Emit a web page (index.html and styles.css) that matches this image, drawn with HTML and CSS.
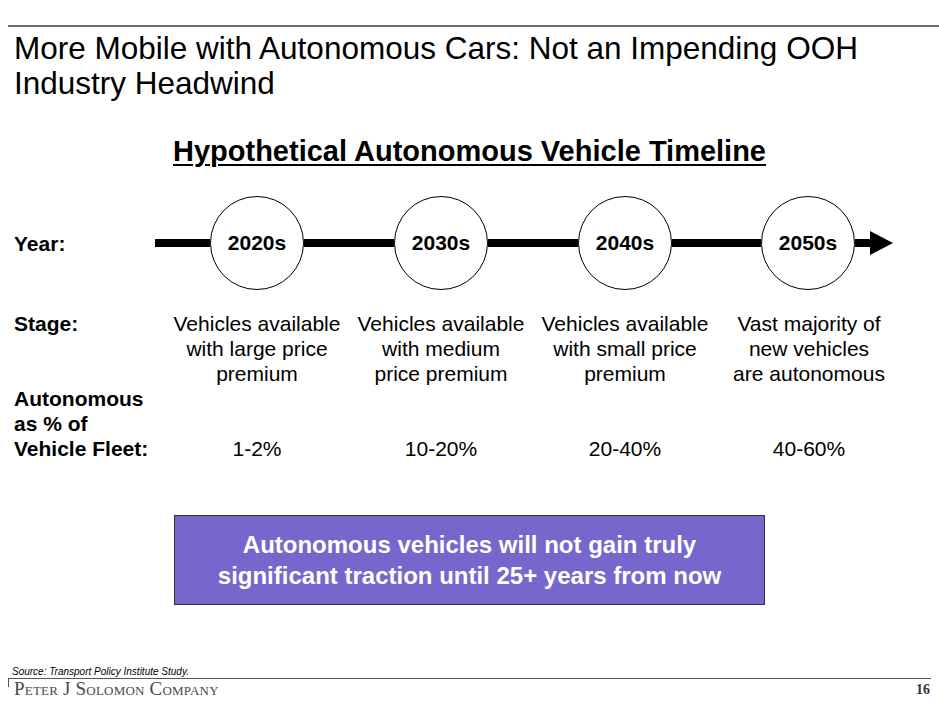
FILE: index.html
```html
<!DOCTYPE html>
<html>
<head>
<meta charset="utf-8">
<link rel="stylesheet" href="styles.css">
</head>
<body>
<div class="slide">
  <div class="top-rule"></div>
  <h1 class="title">More Mobile with Autonomous Cars: Not an Impending OOH<br>Industry Headwind</h1>
  <h2 class="subtitle">Hypothetical Autonomous Vehicle Timeline</h2>

  <div class="timeline">
    <div class="label">Year:</div>
    <div class="track">
      <div class="seg seg-a"></div>
      <div class="node">2020s</div>
      <div class="seg seg-b"></div>
      <div class="node">2030s</div>
      <div class="seg seg-b"></div>
      <div class="node">2040s</div>
      <div class="seg seg-c"></div>
      <div class="node">2050s</div>
      <div class="seg seg-d"></div>
      <div class="arrow"></div>
    </div>
  </div>

  <div class="table">
    <div class="label">Stage:</div>
    <div class="cell">Vehicles available<br>with large price<br>premium</div>
    <div class="cell">Vehicles available<br>with medium<br>price premium</div>
    <div class="cell">Vehicles available<br>with small price<br>premium</div>
    <div class="cell">Vast majority of<br>new vehicles<br>are autonomous</div>

    <div class="label">Autonomous<br>as % of<br>Vehicle Fleet:</div>
    <div class="cell pct">1-2%</div>
    <div class="cell pct">10-20%</div>
    <div class="cell pct">20-40%</div>
    <div class="cell pct">40-60%</div>
  </div>

  <div class="callout">Autonomous vehicles will not gain truly<br>significant traction until 25+ years from now</div>

  <div class="source">Source: Transport Policy Institute Study.</div>
  <div class="footer">
    <div class="brand">Peter J Solomon Company</div>
    <div class="page">16</div>
  </div>
</div>
</body>
</html>
```

FILE: styles.css
```css
html, body {
  margin: 0;
  padding: 0;
  background: #ffffff;
}

.slide {
  width: 939px;
  height: 703px;
  display: flex;
  flex-direction: column;
  font-family: "Liberation Sans", Arial, sans-serif;
  color: #000;
  overflow: hidden;
}

.top-rule {
  margin: 25px 0 0 8px;
  height: 2px;
  background: #6e6e6e;
}

.title {
  margin: 4px 0 0 14px;
  font-size: 31.5px;
  font-weight: normal;
  line-height: 35px;
}

.subtitle {
  margin: 34px 0 0 0;
  text-align: center;
  font-size: 29px;
  line-height: 32px;
  font-weight: bold;
  text-decoration: underline;
  text-decoration-thickness: 2px;
  text-underline-offset: 3px;
}

.timeline {
  margin: 29px 0 0 14px;
  display: flex;
  align-items: center;
}

.label {
  font-size: 21px;
  font-weight: bold;
  line-height: 25px;
}

.timeline .label {
  width: 141px;
}

.track {
  display: flex;
  align-items: center;
}

.seg {
  height: 8px;
  background: #000;
}
.seg-a { width: 55px; }
.seg-b { width: 90px; }
.seg-c { width: 89px; }
.seg-d { width: 15px; }

.node {
  width: 92px;
  height: 92px;
  border: 1.5px solid #000;
  border-radius: 50%;
  display: flex;
  align-items: center;
  justify-content: center;
  font-size: 21px;
  font-weight: bold;
  flex: none;
}

.arrow {
  width: 0;
  height: 0;
  border-top: 12px solid transparent;
  border-bottom: 12px solid transparent;
  border-left: 23px solid #000;
}

.table {
  margin: 21px 0 0 14px;
  display: grid;
  grid-template-columns: 151px repeat(4, 184px);
}

.cell {
  text-align: center;
  font-size: 21px;
  line-height: 25px;
  white-space: nowrap;
}

.pct {
  align-self: end;
}

.callout {
  margin: 54px auto 0 auto;
  width: 589px;
  padding: 13px 0 13px 0;
  background: #7766cc;
  border: 1px solid #333;
  color: #fff;
  font-size: 24px;
  font-weight: bold;
  line-height: 31px;
  text-align: center;
}

.source {
  margin: 61px 0 0 12px;
  font-size: 10px;
  font-style: italic;
  line-height: 12px;
}

.footer {
  margin: 0 8px 0 8px;
  border-top: 1.5px solid #555;
  border-left: 1.5px solid #555;
  height: 8px;
  display: flex;
  justify-content: space-between;
  align-items: flex-start;
}

.brand {
  margin: 1px 0 0 5px;
  font-family: "Liberation Serif", "Times New Roman", serif;
  font-variant: small-caps;
  font-size: 19px;
  line-height: 18px;
  color: #4a4a4a;
  letter-spacing: 0.2px;
}

.page {
  margin: 3px 1px 0 0;
  font-family: "Liberation Serif", "Times New Roman", serif;
  font-weight: bold;
  font-size: 14px;
  line-height: 16px;
  color: #333;
}
```
